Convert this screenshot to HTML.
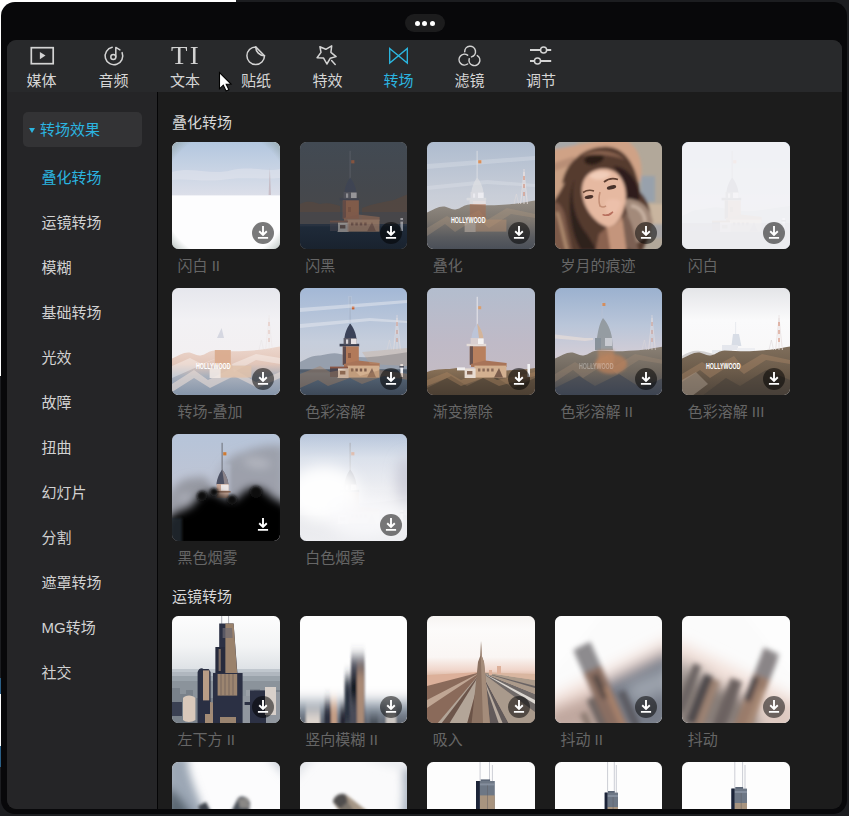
<!DOCTYPE html>
<html lang="zh-CN">
<head>
<meta charset="utf-8">
<title>转场</title>
<style>
html,body{margin:0;padding:0;}
body{width:849px;height:816px;overflow:hidden;background:#1c1d20;position:relative;
 font-family:"Liberation Sans","Noto Sans CJK SC",sans-serif;-webkit-font-smoothing:antialiased;}
.abs{position:absolute;}
#layer{left:0;top:0;width:841.5px;height:809px;overflow:hidden;}
#bgw{left:0;top:0;width:236px;height:16px;background:#fff;}
#bgl{left:0;top:0;width:16px;height:376px;background:#fff;}
#bgl2{left:0;top:678px;width:2px;height:89px;background:#2b5f86;}
#bgl3{left:0;top:694px;width:2px;height:52px;background:#fff;}
#win{left:1.2px;top:2px;width:845.8px;height:812px;background:#08080a;border-radius:14px;}
#pill{left:405px;top:14px;width:40px;height:18px;border-radius:9px;background:#1c1c1d;}
#pill i{position:absolute;top:6.5px;width:5.4px;height:5.4px;border-radius:50%;background:#fff;}
#panel{left:7px;top:39.5px;width:834.5px;height:769.5px;border-radius:9px;background:#1c1c1c;overflow:hidden;}
#tabs{left:0;top:0;width:100%;height:52.5px;background:#28292b;}
#side{left:0;top:52.5px;width:150px;height:720px;background:#252527;}
#sdiv{left:150px;top:52.5px;width:1.2px;height:720px;background:#050506;}
.tab{position:absolute;top:0;width:72px;height:52px;color:#d6d6d6;font-size:15px;text-align:center;}
.tab svg{position:absolute;left:50%;top:4px;margin-left:-14px;width:28px;height:24px;}
.tab span{position:absolute;left:0;right:0;top:29px;line-height:22px;}
.tab.on{color:#2bb5e0;}
.tl{position:absolute;top:70px;width:72px;height:22px;line-height:22px;text-align:center;font-size:15px;color:#d6d6d6;white-space:nowrap;}
.tl.on{color:#2bb5e0;}
#ti{left:171px;top:42.2px;width:40px;height:28px;line-height:28px;text-align:left;font-family:"Liberation Serif",serif;font-size:24.5px;letter-spacing:2px;color:#d2d2d2;white-space:nowrap;transform:scaleX(1.1);transform-origin:0 0;}
#cat{left:22.5px;top:112px;width:119.2px;height:35px;border-radius:5px;background:#333335;color:#2bb5e0;font-size:15px;line-height:34px;}
#cat b{position:absolute;left:6.6px;top:15.6px;width:0;height:0;border-left:3px solid transparent;border-right:3px solid transparent;border-top:5px solid #2bb5e0;}
#cat span{position:absolute;left:17.5px;top:0.5px;}
.si{position:absolute;left:41.5px;height:24px;line-height:24px;font-size:15px;color:#d2d2d2;white-space:nowrap;}
.si.on{color:#2bb5e0;}
.h{position:absolute;left:172px;height:22px;line-height:22px;font-size:15px;color:#d8d8d8;white-space:nowrap;}
.t{position:absolute;width:107.8px;height:107.3px;border-radius:6.5px;overflow:hidden;background:#888;}
.t svg.pic{position:absolute;left:0;top:0;width:108px;height:108px;}
.dl{position:absolute;left:80.4px;top:80.3px;width:22px;height:22px;border-radius:50%;background:rgba(0,0,0,.52);}
.dl svg{position:absolute;left:0;top:0;width:22px;height:22px;}
.l{position:absolute;height:20px;line-height:20px;font-size:15px;color:#666;white-space:nowrap;}
</style>
</head>
<body>
<svg width="0" height="0" style="position:absolute">
<defs>
<filter id="lt" x="-5%" y="-5%" width="110%" height="110%"><feColorMatrix type="matrix" values=".42 0 0 0 .52  0 .42 0 0 .52  0 0 .42 0 .54  0 0 0 1 0"/></filter>
<filter id="lt2" x="-5%" y="-5%" width="110%" height="110%"><feColorMatrix type="matrix" values=".28 0 0 0 .72  0 .28 0 0 .72  0 0 .28 0 .74  0 0 0 1 0"/></filter>
<filter id="b1" x="-20%" y="-20%" width="140%" height="140%"><feGaussianBlur stdDeviation="0.6"/></filter>
<filter id="b2" x="-20%" y="-20%" width="140%" height="140%"><feGaussianBlur stdDeviation="1.6"/></filter>
<filter id="b3" x="-30%" y="-30%" width="160%" height="160%"><feGaussianBlur stdDeviation="2.5"/></filter>
<filter id="b4" x="-30%" y="-30%" width="160%" height="160%"><feGaussianBlur stdDeviation="4"/></filter>
<filter id="b7" x="-40%" y="-40%" width="180%" height="180%"><feGaussianBlur stdDeviation="7"/></filter>
<filter id="bv" x="-20%" y="-40%" width="140%" height="180%"><feGaussianBlur stdDeviation="1.2 7"/></filter>
<linearGradient id="skyT" x1="0" y1="0" x2="0" y2="1"><stop offset="0" stop-color="#9db3d3"/><stop offset=".55" stop-color="#bcc4d6"/><stop offset="1" stop-color="#d3cdd0"/></linearGradient>
<linearGradient id="seaT" x1="0" y1="0" x2="0" y2="1"><stop offset="0" stop-color="#5b6b7c"/><stop offset="1" stop-color="#3c4756"/></linearGradient>
<linearGradient id="skyH" x1="0" y1="0" x2="0" y2="1"><stop offset="0" stop-color="#a4b5ca"/><stop offset=".6" stop-color="#c3c7d1"/><stop offset="1" stop-color="#d2ccce"/></linearGradient>
<linearGradient id="hillG" x1="0" y1="0" x2="0" y2="1"><stop offset="0" stop-color="#8f7d68"/><stop offset=".45" stop-color="#7a6852"/><stop offset="1" stop-color="#4d473f"/></linearGradient>
<linearGradient id="skyC" x1="0" y1="0" x2="0" y2="1"><stop offset="0" stop-color="#fdfdfd"/><stop offset=".28" stop-color="#f3f4f5"/><stop offset=".5" stop-color="#dde1e5"/><stop offset="1" stop-color="#c4ccd4"/></linearGradient>
<!-- Maiden's tower -->
<g id="tower">
 <rect x="49.6" y="8.8" width="1" height="29" fill="#6d6f78"/>
 <rect x="51.2" y="18.2" width="3.2" height="3.2" fill="#c8602e"/>
 <path d="M50.2 35.5 C53 39 56 45 56.4 50.5 H44.4 C44.8 45 47.4 39 50.2 35.5Z" fill="#3a4258"/>
 <rect x="39.6" y="55.8" width="19.6" height="2.6" fill="#3b4052"/>
 <rect x="43.6" y="50" width="13" height="6.5" fill="#5b5a66"/>
 <rect x="51" y="50.6" width="5.6" height="5.4" fill="#e6e2e4"/>
 <rect x="46" y="51.4" width="2.2" height="4.4" fill="#d8d4d8"/>
 <rect x="42.8" y="58.4" width="16" height="18.4" fill="#b27a5a"/>
 <rect x="42.8" y="58.4" width="3.2" height="18.4" fill="#5a4a4e"/>
 <rect x="48" y="65" width="3" height="5" fill="#8a5a44"/>
 <path d="M44 76 L58 72.5 L79.6 75 V79 H44Z" fill="#a87458"/>
 <rect x="47.4" y="77.6" width="32" height="12" fill="#d3b090"/>
 <rect x="37.6" y="80.4" width="11" height="9.6" fill="#e2d4c8"/>
 <rect x="30" y="79.4" width="8" height="9.6" fill="#4a4650"/>
 <rect x="30" y="78.6" width="18" height="1.8" fill="#8a5644"/>
 <path d="M51 80.6h2.4v3h-2.4zM55.4 80.6h2.4v3h-2.4zM59.8 80.6h2.4v3h-2.4zM64.2 80.6h2.4v3h-2.4zM40 83h5.4v3.4h-5.4z" fill="#7a5a4a"/>
 <path d="M67 89.6 L72 80 L76 89.6Z" fill="#8a6a58"/>
 <rect x="100.4" y="76" width="2.6" height="13" fill="#eeeef2"/>
 <rect x="99.4" y="78" width="4.6" height="1.6" fill="#50525e"/>
</g>
<!-- Hollywood ridge -->
<path id="ridge" d="M0 70.6 C6 68 11 64.6 16 64.6 C21 64.6 24 68 28.5 67.4 C34 66.6 37 62.4 42.6 62.4 C51 62.4 59 63.6 67.6 63.2 C76 62.8 82 62.4 88 61.8 C95 61 102 59.6 108 58.6 V108 H0Z"/>
<g id="rtower">
 <path d="M97 27 V62 M97 30 L93.6 62 M97 30 L100.4 62" fill="none" stroke="#e8e0e0" stroke-width=".8"/>
 <path d="M97 34v4M97 42v4M97 50v4" stroke="#d2846a" stroke-width="1"/>
 <path d="M87 62 L89.4 52 L91.6 62" fill="none" stroke="#ddd8da" stroke-width=".6"/>
</g>
<!-- Skyscraper (Willis) -->
<g id="sky1">
 <path d="M49.7 0V8M56.6 0V8" stroke="#8a8e98" stroke-width=".7"/>
 <path d="M47.2 7.6 H61.6 L65.4 57 H70.6 V108 H41 V57 H43.6 V31 H47.2Z" fill="#2b3044"/>
 <path d="M53.4 7.6 H61.6 L65.2 57 H53.4Z" fill="#9a826c"/>
 <path d="M50.6 12 H60 L60.6 22 H50.6Z" fill="#6e6a72" opacity=".7"/>
 <rect x="43.6" y="31" width="9.4" height="26" fill="#262a3c"/>
 <rect x="46.6" y="33" width="2.2" height="22" fill="#7a6a62"/>
 <rect x="45.6" y="58" width="19.6" height="21.6" fill="#9c8570"/>
 <path d="M49 58v21.6M53 58v21.6M57 58v21.6M61 58v21.6" stroke="#6a5c58" stroke-width=".7"/>
 <rect x="48" y="101" width="16" height="7" fill="#9a8470"/>
</g>
<g id="sky2">
 <path d="M25.6 56 C27 52 30 51.6 31.4 53 H36.6 L38.6 56 V108 H25.6Z" fill="#2a2f43"/>
 <rect x="31" y="54.4" width="6.2" height="30" fill="#b89c86"/>
 <path d="M38 86 C44 86 47 92 44 100 L38 108Z" fill="#a08a78"/>
 <rect x="33" y="98" width="8" height="10" fill="#a48c76"/>
 <path d="M11 82 C13 78.6 21 78.6 23.4 82 V104 C20 106.6 13.6 106.6 11 104Z" fill="#d9c8ba"/>
 <rect x="0" y="86" width="10" height="14" fill="#3a4052"/>
 <rect x="78" y="74.4" width="16" height="33.6" fill="#2c3144"/>
 <rect x="93" y="71" width="11" height="28" fill="#d8d0ca"/>
 <rect x="72.6" y="86" width="6" height="3" fill="#2c3144"/>
</g>
</defs>
</svg>
<div class="abs" id="bgw"></div><div class="abs" id="bgl"></div><div class="abs" id="bgl2"></div><div class="abs" id="bgl3"></div>
<div class="abs" id="win"></div>
<div class="abs" id="pill"><i style="left:9.5px"></i><i style="left:17px"></i><i style="left:24.5px"></i></div>
<div class="abs" id="panel">
 <div class="abs" id="tabs"></div>
 <div class="abs" id="side"></div>
 <div class="abs" id="sdiv"></div>
</div>
<div class="abs" id="layer">
<svg class="abs" id="ticons" width="849" height="100" viewBox="0 0 849 100" style="left:0;top:0" fill="none" stroke="#d4d4d4" stroke-width="1.5" stroke-linejoin="round" stroke-linecap="round">
<!-- media -->
<rect x="31.3" y="47.7" width="21.9" height="16" stroke-width="1.7" stroke-linejoin="miter"/>
<path d="M39.9 52 L45.5 55.6 L39.9 59.2 Z" fill="#d4d4d4" stroke="none"/>
<!-- audio -->
<path d="M112.2 47.3 A8.8 8.8 0 1 0 122.1 52.6"/>
<circle cx="113.3" cy="57.1" r="2.5"/>
<path d="M115.8 57.1 V47.4 L119.9 49.9"/>
<!-- sticker -->
<path d="M255.7 46.9 A8.8 8.8 0 1 0 264.5 55.7 Z"/>
<path d="M255.7 46.9 A8.8 8.8 0 0 0 264.5 55.7"/>
<!-- effects -->
<path d="M319.9 46.7 L325.8 49.3 L331.7 45.8 L330.9 52.4 L336.1 56.6 L330.2 58.3 L326.9 64 L323.6 58.1 L317.1 57.7 L321 52.4 Z"/>
<path d="M331.6 60.6 L335.2 64.4"/>
<!-- transition -->
<path d="M389.7 48.5 L407.3 63 V48.5 L389.7 63 Z" stroke="#2bb8e2" stroke-width="1.35" stroke-linejoin="miter"/>
<!-- filter -->
<path d="M464.7 51.7 A5.4 5.4 0 1 1 471.5 56.9"/>
<path d="M467.6 55.2 A5.4 5.4 0 1 0 467.6 64"/>
<path d="M469.2 58.8 A5.4 5.4 0 1 0 477.3 55.6"/>
<!-- adjust -->
<g stroke-width="1.8" stroke-linecap="butt"><path d="M530 50 H540.5 M546.7 50 H551.2 M530 61 H534.4 M540.6 61 H551.2"/></g>
<circle cx="543.6" cy="50" r="3.05"/>
<circle cx="537.5" cy="61" r="3.05"/>
</svg>
<div class="abs" id="ti">TI</div>
<div class="tl" style="left:5.5px">媒体</div>
<div class="tl" style="left:77.5px">音频</div>
<div class="tl" style="left:149px">文本</div>
<div class="tl" style="left:220px">贴纸</div>
<div class="tl" style="left:291.5px">特效</div>
<div class="tl on" style="left:362.5px">转场</div>
<div class="tl" style="left:433.5px">滤镜</div>
<div class="tl" style="left:505px">调节</div>
<div class="abs" id="cat"><b></b><span>转场效果</span></div>
<div class="si on" style="top:165.5px">叠化转场</div>
<div class="si" style="top:210.5px">运镜转场</div>
<div class="si" style="top:255.5px">模糊</div>
<div class="si" style="top:300.5px">基础转场</div>
<div class="si" style="top:345.5px">光效</div>
<div class="si" style="top:390.5px">故障</div>
<div class="si" style="top:435.5px">扭曲</div>
<div class="si" style="top:480.5px">幻灯片</div>
<div class="si" style="top:525.5px">分割</div>
<div class="si" style="top:570.5px">遮罩转场</div>
<div class="si" style="top:615.5px">MG转场</div>
<div class="si" style="top:660.5px">社交</div>
<div class="h" style="top:111.5px">叠化转场</div>
<div class="h" style="top:585.5px">运镜转场</div>
<div class="t" id="t00" style="left:172px;width:108px;top:142px"><svg class="pic" viewBox="0 0 108 108" preserveAspectRatio="none"><defs><linearGradient id="g00" x1="0" y1="0" x2="0" y2="1"><stop offset="0" stop-color="#b3c7df"/><stop offset="1" stop-color="#dcdfe9"/></linearGradient>
<radialGradient id="v00" cx=".5" cy=".5" r=".75"><stop offset=".78" stop-color="#7f9088" stop-opacity="0"/><stop offset="1" stop-color="#7f9088" stop-opacity=".75"/></radialGradient></defs>
<rect width="108" height="108" fill="#fdfdfe"/>
<rect width="108" height="53.4" fill="url(#g00)"/>
<path d="M0 30 C20 24 40 34 60 28 C80 24 95 30 108 27 V36 C90 38 70 34 50 38 C30 40 12 36 0 38Z" fill="#e4e6ee" opacity=".5"/>
<path d="M97.8 25.6 L96.6 53 H99 Z" fill="#c3b4bd" opacity=".8"/>
<rect width="108" height="108" fill="url(#v00)"/></svg><div class="dl"><svg viewBox="0 0 22 22"><path d="M11 4V12.6M7.2 9.2L11 12.9L14.8 9.2M5.9 15.9H16.1" fill="none" stroke="#fff" stroke-width="1.9"/></svg></div></div>
<div class="l" style="left:177.5px;top:255.5px">闪白 II</div>
<div class="t" id="t01" style="left:299.8px;width:107.4px;top:142px"><svg class="pic" viewBox="0 0 108 108" preserveAspectRatio="none"><defs><linearGradient id="g01" x1="0" y1="0" x2="0" y2="1"><stop offset="0" stop-color="#424a53"/><stop offset=".45" stop-color="#45484d"/><stop offset=".8" stop-color="#494849"/><stop offset="1" stop-color="#494849"/></linearGradient>
<linearGradient id="s01" x1="0" y1="0" x2="0" y2="1"><stop offset="0" stop-color="#1f2b3a"/><stop offset="1" stop-color="#19222e"/></linearGradient></defs>
<rect width="108" height="108" fill="url(#g01)"/>
<path d="M0 62 C8 58 14 60 20 62 C28 60 34 62 40 64 V84 H0Z M62 66 C72 62 84 60 94 58 L108 52 V84 H62Z" fill="#55473f" opacity=".75"/>
<path d="M0 70 h108 v14 H0Z" fill="#3b4652" opacity=".5"/>
<rect y="82" width="108" height="26" fill="url(#s01)"/>
<rect y="82" width="108" height="2.4" fill="#2b3542" opacity=".8"/>
<g opacity=".5"><use href="#tower"/></g>
<rect x="42.8" y="58.4" width="16" height="18.4" fill="#8a4f38" opacity=".35"/>
<rect x="47.4" y="77.6" width="32" height="12" fill="#8a5a44" opacity=".3"/></svg><div class="dl"><svg viewBox="0 0 22 22"><path d="M11 4V12.6M7.2 9.2L11 12.9L14.8 9.2M5.9 15.9H16.1" fill="none" stroke="#fff" stroke-width="1.9"/></svg></div></div>
<div class="l" style="left:305.3px;top:255.5px">闪黑</div>
<div class="t" id="t02" style="left:427.2px;width:107.9px;top:142px"><svg class="pic" viewBox="0 0 108 108" preserveAspectRatio="none"><defs><linearGradient id="g02" x1="0" y1="0" x2="0" y2="1"><stop offset="0" stop-color="#aebccf"/><stop offset=".5" stop-color="#c9ced8"/><stop offset="1" stop-color="#d9d5d6"/></linearGradient>
<linearGradient id="h02" x1="0" y1="0" x2="0" y2="1"><stop offset="0" stop-color="#8f877d"/><stop offset=".4" stop-color="#777068"/><stop offset=".75" stop-color="#505256"/><stop offset="1" stop-color="#3e444e"/></linearGradient></defs>
<rect width="108" height="108" fill="url(#g02)"/>
<path d="M0 22 L108 14 V18 L0 27Z M0 44 L60 38 L108 42 V45 L60 42 L0 48Z" fill="#e6e8ee" opacity=".3"/>
<g opacity=".75" filter="url(#lt2)"><use href="#tower"/></g><rect x="51.2" y="18.2" width="3.2" height="3.2" fill="#d9905a"/>
<use href="#ridge" fill="url(#h02)" opacity=".93"/>
<path d="M0 86 L20 74 L30 80 L52 68 L60 78 L80 66 L108 72 V76 L84 72 L62 86 L50 76 L28 90 L18 82 L0 94Z" fill="#b59a80" opacity=".3"/>
<g opacity=".5"><rect x="42.8" y="62" width="16" height="14.8" fill="#a8694a"/><rect x="47.4" y="77.6" width="32" height="12" fill="#b58e70"/><rect x="37.6" y="80.4" width="11" height="9.6" fill="#cbbcb0"/></g>
<use href="#rtower"/>
<text x="24" y="80.8" font-family="'Liberation Sans',sans-serif" font-weight="bold" font-size="9" textLength="34.5" lengthAdjust="spacingAndGlyphs" fill="#fff">HOLLYWOOD</text></svg><div class="dl"><svg viewBox="0 0 22 22"><path d="M11 4V12.6M7.2 9.2L11 12.9L14.8 9.2M5.9 15.9H16.1" fill="none" stroke="#fff" stroke-width="1.9"/></svg></div></div>
<div class="l" style="left:432.7px;top:255.5px">叠化</div>
<div class="t" id="t03" style="left:554.9px;width:107.4px;top:142px"><svg class="pic" viewBox="0 0 108 108" preserveAspectRatio="none"><rect width="108" height="108" fill="#b2a89a"/>
<g filter="url(#b2)">
<rect x="-4" y="-4" width="26" height="12" fill="#a7a8a8"/>
<path d="M86 34 h14 v26 h-14Z" fill="#98a1ac"/>
<path d="M92 62 h20 v20 h-20Z" fill="#c9b59f"/>
<path d="M96 82 h16 v14 h-16Z" fill="#a9a7a8"/>
<path d="M-4 8 C20 4 40 -2 70 -4 L80 6 C87 16 88 30 85 40 L70 30 C60 14 40 12 24 22 L-4 36Z" fill="#cfa286"/>
<path d="M-4 22 L20 14 L12 40 L-4 46Z" fill="#b88e76"/>
<path d="M-4 30 L14 24 L10 56 L-4 60Z" fill="#c9a084"/>
<path d="M7 42 C11 18 32 3 54 5 C72 7 82 26 85 50 C96 60 100 82 92 98 L86 112 H-4 V62 C2 56 6 48 10 40Z" fill="#553a2f"/>
<path d="M-4 60 C6 58 10 70 12 84 L18 112 H-4Z" fill="#7c5a49"/>
<path d="M2 70 C6 80 8 94 12 108" stroke="#b08c70" stroke-width="3" fill="none"/>
<ellipse cx="39" cy="17" rx="10" ry="5.5" fill="#2a1c19" transform="rotate(-12 39 17)"/>
<path d="M26 14 C40 6 60 8 70 18 C58 12 40 12 26 14Z" fill="#8a6450"/>
<path d="M58 24 C72 24 84 38 85 56 C78 64 70 62 66 54 C70 44 66 32 58 24Z" fill="#2f1f1b"/>
<path d="M20 36 C14 56 20 78 32 92 L42 108 H26 C16 92 10 60 20 36Z" fill="#2f201c"/>
<path d="M68 58 C80 54 96 64 98 80 C94 94 84 102 74 104 C76 90 74 72 68 58Z" fill="#a38a7a"/>
<path d="M76 64 C84 64 90 72 90 80" stroke="#ccb6a6" stroke-width="3" fill="none"/>
<path d="M70 70 C66 80 70 92 64 104 L84 110 C80 96 78 80 70 70Z" fill="#7b6052"/>
<path d="M27 46 C28 30 44 24 56 28 C68 32 73 48 70 62 C67 76 60 86 53 85 C42 83 26 66 27 46Z" fill="#e6b9a1"/>
<path d="M34 34 C40 28 50 28 56 32 C52 38 40 40 34 34Z" fill="#f1cdb9"/>
<path d="M50 60 C54 56 62 56 66 60 C64 70 58 76 52 72Z" fill="#ecc0aa"/>
<path d="M52 85 C58 86 64 80 67 74 L72 112 H44 L46 92Z" fill="#c4957b"/>
<path d="M44 92 L52 86 L56 112 H40Z" fill="#8a6250"/>
</g>
<g filter="url(#b1)">
<path d="M28 50.5 q5-3.5 11-1.5" stroke="#6a4838" stroke-width="1.6" fill="none"/>
<path d="M49 40 q6-5 14-2.5" stroke="#5e3f31" stroke-width="1.7" fill="none"/>
<ellipse cx="34" cy="55" rx="4.4" ry="1.9" fill="#4a3129" transform="rotate(-10 34 55)"/>
<ellipse cx="56.5" cy="45.4" rx="4.8" ry="2" fill="#47302a" transform="rotate(-14 56.5 45.4)"/>
<path d="M45 50 q-2 8 0 14 q3 2 6 0" stroke="#c48f76" stroke-width="1.6" fill="none"/>
<path d="M47.6 72.6 q5 1.6 10.4-2.8 q-4 5.4-10.4 2.8Z" fill="#b8705e" stroke="#b8705e" stroke-width="1.2"/>
</g></svg><div class="dl"><svg viewBox="0 0 22 22"><path d="M11 4V12.6M7.2 9.2L11 12.9L14.8 9.2M5.9 15.9H16.1" fill="none" stroke="#fff" stroke-width="1.9"/></svg></div></div>
<div class="l" style="left:560.4px;top:255.5px">岁月的痕迹</div>
<div class="t" id="t04" style="left:682.2px;width:108px;top:142px"><svg class="pic" viewBox="0 0 108 108" preserveAspectRatio="none"><rect width="108" height="108" fill="url(#skyT)"/>
<path d="M0 74 C8 70 14 67 20 67.6 C28 66 34 64 40 66 C50 68 60 70 70 69 C82 68 94 66 108 64 V84 H0Z" fill="#8d96a6" opacity=".85"/>
<rect y="81.4" width="108" height="27" fill="url(#seaT)"/>
<rect y="81.4" width="108" height="3" fill="#4c5562" opacity=".6"/>
<use href="#tower"/><rect width="108" height="108" fill="#f5f5f7" opacity=".935"/><rect y="81.4" width="108" height="27" fill="#ececf0" opacity=".6"/></svg><div class="dl"><svg viewBox="0 0 22 22"><path d="M11 4V12.6M7.2 9.2L11 12.9L14.8 9.2M5.9 15.9H16.1" fill="none" stroke="#fff" stroke-width="1.9"/></svg></div></div>
<div class="l" style="left:687.7px;top:255.5px">闪白</div>
<div class="t" id="t10" style="left:172px;width:108px;top:288px"><svg class="pic" viewBox="0 0 108 108" preserveAspectRatio="none"><defs><linearGradient id="g10" x1="0" y1="0" x2="0" y2="1"><stop offset="0" stop-color="#e6e7ed"/><stop offset=".3" stop-color="#f2f1f4"/><stop offset="1" stop-color="#f3eeee"/></linearGradient>
<linearGradient id="h10" x1="0" y1="0" x2="0" y2="1"><stop offset="0" stop-color="#ecd6cc"/><stop offset=".35" stop-color="#e2c6b9"/><stop offset=".6" stop-color="#a9b0bc"/><stop offset="1" stop-color="#8393a8"/></linearGradient></defs>
<rect width="108" height="108" fill="url(#g10)"/>
<use href="#ridge" fill="url(#h10)"/>
<path d="M0 96 L22 82 L36 92 L60 80 L84 94 L108 84 V90 L86 100 L62 88 L38 100 L22 90 L0 104Z" fill="#e9dcd6" opacity=".6"/>
<path d="M0 78 L18 70 L30 76 L50 68 L0 90Z M60 76 L84 66 L108 70 V76 L84 72 L62 84Z" fill="#fff" opacity=".35"/>
<rect x="42.8" y="62" width="16" height="15" fill="#d9aa8c" opacity=".9"/>
<rect x="47.4" y="77.6" width="32" height="12" fill="#e0c2aa" opacity=".85"/>
<rect x="37.6" y="80.4" width="11" height="9.6" fill="#f3ebe6" opacity=".85"/>
<path d="M45 50 L49.6 40 L52 50Z" fill="#c9ccd8" opacity=".7"/>
<use href="#rtower" opacity=".45"/>
<text x="24" y="80.8" font-family="'Liberation Sans',sans-serif" font-weight="bold" font-size="9" textLength="34.5" lengthAdjust="spacingAndGlyphs" fill="#fff">HOLLYWOOD</text></svg><div class="dl"><svg viewBox="0 0 22 22"><path d="M11 4V12.6M7.2 9.2L11 12.9L14.8 9.2M5.9 15.9H16.1" fill="none" stroke="#fff" stroke-width="1.9"/></svg></div></div>
<div class="l" style="left:177.5px;top:401.5px">转场-叠加</div>
<div class="t" id="t11" style="left:299.8px;width:107.4px;top:288px"><svg class="pic" viewBox="0 0 108 108" preserveAspectRatio="none"><rect width="108" height="108" fill="url(#g11)"/>
<path d="M0 74 C8 70 14 67 20 67.6 C28 66 34 64 40 66 C50 68 60 70 70 69 C82 68 94 66 108 64 V84 H0Z" fill="#8d96a6" opacity=".85"/>
<rect y="81.4" width="108" height="27" fill="url(#seaT)"/>
<rect y="81.4" width="108" height="3" fill="#4c5562" opacity=".6"/>
<use href="#tower"/><defs><linearGradient id="g11" x1="0" y1="0" x2="0" y2="1"><stop offset="0" stop-color="#a3b8d6"/><stop offset=".5" stop-color="#c6cedc"/><stop offset="1" stop-color="#d0ccd0"/></linearGradient></defs>
<rect x="48" y="8" width="4" height="28" fill="#b4c3d9" opacity=".8"/><path d="M0 20 L108 12 V15 L0 24Z M0 36 L70 30 L108 33 V35 L70 33 L0 40Z" fill="#e8eaf0" opacity=".5"/>
<use href="#rtower" opacity=".75"/>
<path d="M0 86 L20 78 L30 84 L52 80 L60 88 L80 82 L108 86 V92 L84 88 L62 96 L50 90 L28 98 L18 92 L0 100Z" fill="#a8805e" opacity=".4"/>
<path d="M62 64 L108 60 V78 L70 76Z" fill="#c9a27e" opacity=".28"/></svg><div class="dl"><svg viewBox="0 0 22 22"><path d="M11 4V12.6M7.2 9.2L11 12.9L14.8 9.2M5.9 15.9H16.1" fill="none" stroke="#fff" stroke-width="1.9"/></svg></div></div>
<div class="l" style="left:305.3px;top:401.5px">色彩溶解</div>
<div class="t" id="t12" style="left:427.2px;width:107.9px;top:288px"><svg class="pic" viewBox="0 0 108 108" preserveAspectRatio="none"><defs><linearGradient id="g12" x1="0" y1="0" x2="0" y2="1"><stop offset="0" stop-color="#b3bdce"/><stop offset=".5" stop-color="#bfbac7"/><stop offset="1" stop-color="#c6bcc2"/></linearGradient>
<linearGradient id="h12" x1="0" y1="0" x2="0" y2="1"><stop offset="0" stop-color="#8a7258"/><stop offset="1" stop-color="#59483a"/></linearGradient></defs>
<rect width="108" height="108" fill="url(#g12)"/>
<rect x="49.7" y="8.8" width="1" height="29" fill="#e8e6ea"/>
<rect x="51.2" y="18.2" width="3" height="3" fill="#d9a070"/>
<path d="M50.2 35.5 C53 39 56 45 56.4 50.5 H44.4 C44.8 45 47.4 39 50.2 35.5Z" fill="#bcc4d8"/>
<path d="M50.2 35.5 C53 39 56 45 56.4 50.5 H52 Z" fill="#d3b49a"/>
<rect x="39.6" y="55.8" width="19.6" height="2.4" fill="#e4dcd8"/>
<rect x="43.6" y="50" width="13" height="6.5" fill="#d9cfd0"/>
<rect x="51" y="50.6" width="5.6" height="5.4" fill="#f4f2f2"/>
<rect x="42.8" y="58.4" width="16" height="18.4" fill="#b8805e"/>
<rect x="42.8" y="58.4" width="3.2" height="18.4" fill="#6a5450"/>
<path d="M44 76 L58 72.5 L79.6 75 V79 H44Z" fill="#a87458"/>
<path d="M0 84 C10 80 20 82 30 80 C40 82 60 84 70 83 C84 82 96 82 108 80 V108 H0Z" fill="url(#h12)"/>
<path d="M0 100 L24 88 L40 98 L64 86 L86 100 L108 90 V108 H0Z" fill="#3e352c" opacity=".5"/>
<path d="M0 92 L20 84 L34 92 L56 84 L70 92 L108 84 V88 L72 98 L56 90 L34 98 L20 90 L0 98Z" fill="#b08862" opacity=".4"/>
<rect x="47.4" y="77.6" width="32" height="12" fill="#d3b090"/>
<rect x="37.6" y="80.4" width="11" height="9.6" fill="#e8dcd2"/>
<rect x="30" y="79.4" width="8" height="3" fill="#f0eeee"/>
<path d="M51 80.6h2.4v3h-2.4zM55.4 80.6h2.4v3h-2.4zM59.8 80.6h2.4v3h-2.4zM64.2 80.6h2.4v3h-2.4zM40 83h5.4v3.4h-5.4z" fill="#8a6a58"/>
<path d="M67 89.6 L72 80 L76 89.6Z" fill="#7a5c4c"/>
<rect x="100.4" y="76" width="2.6" height="13" fill="#f2f2f4"/></svg><div class="dl"><svg viewBox="0 0 22 22"><path d="M11 4V12.6M7.2 9.2L11 12.9L14.8 9.2M5.9 15.9H16.1" fill="none" stroke="#fff" stroke-width="1.9"/></svg></div></div>
<div class="l" style="left:432.7px;top:401.5px">渐变擦除</div>
<div class="t" id="t13" style="left:554.9px;width:107.4px;top:288px"><svg class="pic" viewBox="0 0 108 108" preserveAspectRatio="none"><defs><linearGradient id="g13" x1="0" y1="0" x2="0" y2="1"><stop offset="0" stop-color="#9bb1cf"/><stop offset=".35" stop-color="#bac6d9"/><stop offset=".62" stop-color="#d3cdd6"/><stop offset="1" stop-color="#d3cdd6"/></linearGradient>
<linearGradient id="h13" x1="0" y1="0" x2="0" y2="1"><stop offset="0" stop-color="#8a8074"/><stop offset=".5" stop-color="#6f675e"/><stop offset="1" stop-color="#434852"/></linearGradient></defs>
<rect width="108" height="108" fill="url(#g13)"/>
<path d="M0 46.5 L30 50 L38 50 V52 L30 53 L0 50.5Z" fill="#f0e2d8" opacity=".55"/>
<g filter="url(#b1)" opacity=".85"><path d="M48 30 C52 34 56 42 57 50 L58 62 H40 L42 50 C43 42 45 34 48 30Z" fill="#8e9599"/>
<rect x="40" y="50" width="6" height="12" fill="#7d8890"/><rect x="50" y="50" width="7" height="8" fill="#c9ccd2"/></g>
<rect x="46.6" y="14" width="1" height="16" fill="#b9c2d4" opacity=".7"/><rect x="47.4" y="15" width="3" height="3" fill="#d98a50" opacity=".9"/>
<use href="#ridge" fill="url(#h13)"/>
<path d="M0 86 L20 74 L30 80 L52 68 L60 78 L80 66 L108 72 V76 L84 72 L62 86 L50 76 L28 90 L18 82 L0 94Z" fill="#a89078" opacity=".3"/>
<path d="M0 100 L24 88 L40 98 L64 86 L86 100 L108 90 V108 H0Z" fill="#364052" opacity=".5"/>
<g filter="url(#b2)"><ellipse cx="56" cy="76" rx="16" ry="10" fill="#bd8058" opacity=".7"/><rect x="43" y="62" width="16" height="14" fill="#b98460" opacity=".7"/></g>
<use href="#rtower" opacity=".7"/>
<text x="24" y="80.8" font-family="'Liberation Sans',sans-serif" font-weight="bold" font-size="9" textLength="34.5" lengthAdjust="spacingAndGlyphs" fill="#fff" opacity=".3">HOLLYWOOD</text></svg><div class="dl"><svg viewBox="0 0 22 22"><path d="M11 4V12.6M7.2 9.2L11 12.9L14.8 9.2M5.9 15.9H16.1" fill="none" stroke="#fff" stroke-width="1.9"/></svg></div></div>
<div class="l" style="left:560.4px;top:401.5px">色彩溶解 II</div>
<div class="t" id="t14" style="left:682.2px;width:108px;top:288px"><svg class="pic" viewBox="0 0 108 108" preserveAspectRatio="none"><defs><linearGradient id="g14" x1="0" y1="0" x2="0" y2="1"><stop offset="0" stop-color="#e4e5e8"/><stop offset=".3" stop-color="#fafafb"/><stop offset="1" stop-color="#f6f4f4"/></linearGradient>
<linearGradient id="h14" x1="0" y1="0" x2="0" y2="1"><stop offset="0" stop-color="#7f6e5b"/><stop offset=".5" stop-color="#6b5b4a"/><stop offset="1" stop-color="#4e443b"/></linearGradient></defs>
<rect width="108" height="108" fill="url(#g14)"/>
<path d="M0 68 C6 64 12 62 18 63 C24 63 28 66 34 66 L0 78Z" fill="#b9b6b8" opacity=".6"/>
<g opacity=".9"><path d="M53.6 34 V46" stroke="#dfe3ea" stroke-width=".8"/><path d="M51 46 h6 l2.4 12 h-10Z" fill="#d5dbe4"/><rect x="40" y="57" width="16" height="5" fill="#e3e6ec"/><rect x="55" y="60" width="18" height="4" fill="#eceef2"/><rect x="30" y="62" width="20" height="3.4" fill="#e6e8ec"/></g>
<use href="#ridge" fill="url(#h14)"/>
<path d="M0 86 L20 74 L30 80 L52 68 L60 78 L80 66 L108 72 V76 L84 72 L62 86 L50 76 L28 90 L18 82 L0 94Z" fill="#b08a68" opacity=".4"/>
<path d="M20 108 L44 90 L58 98 L84 82 L108 92 V108Z" fill="#3e3a36" opacity=".45"/>
<path d="M0 92 L14 84 L26 96 L10 108 H0Z" fill="#a89a8c" opacity=".5"/>
<use href="#rtower"/>
<text x="24" y="80.8" font-family="'Liberation Sans',sans-serif" font-weight="bold" font-size="9" textLength="34.5" lengthAdjust="spacingAndGlyphs" fill="#fff">HOLLYWOOD</text></svg><div class="dl"><svg viewBox="0 0 22 22"><path d="M11 4V12.6M7.2 9.2L11 12.9L14.8 9.2M5.9 15.9H16.1" fill="none" stroke="#fff" stroke-width="1.9"/></svg></div></div>
<div class="l" style="left:687.7px;top:401.5px">色彩溶解 III</div>
<div class="t" id="t20" style="left:172px;width:108px;top:434px"><svg class="pic" viewBox="0 0 108 108" preserveAspectRatio="none"><defs><linearGradient id="g20" x1="0" y1="0" x2="0" y2="1"><stop offset="0" stop-color="#b6c4d9"/><stop offset="1" stop-color="#c9c5ce"/></linearGradient></defs>
<rect width="108" height="108" fill="url(#g20)"/>
<g filter="url(#b4)">
<path d="M46 40 C54 26 60 20 72 18 C86 12 100 10 112 12 V90 H46Z" fill="#979aa3" opacity=".85"/>
<path d="M70 26 C80 22 92 24 100 30 C92 36 80 36 70 26Z" fill="#bfc1ca" opacity=".7"/>
<path d="M-4 62 C4 48 14 42 24 44 C30 40 36 44 40 52 L44 90 H-4Z" fill="#8e9099" opacity=".85"/>
<path d="M4 64 C10 58 18 58 22 64 C16 70 8 70 4 64Z" fill="#b9bcc6" opacity=".6"/>
</g>
<g filter="url(#b2)"><path d="M43 30 h16 v34 h-16Z" fill="#b9c2d2" opacity=".5"/></g>
<rect x="49.6" y="8.8" width="1" height="29" fill="#6d6f78"/><rect x="51.2" y="18.2" width="3.2" height="3.2" fill="#cf7a32"/>
<path d="M50.2 35.5 C53 39 56 45 56.4 50.5 H44.4 C44.8 45 47.4 39 50.2 35.5Z" fill="#4c5062"/>
<path d="M50.2 35.5 C53 39 56 45 56.4 50.5 H52.4Z" fill="#8a8288"/>
<rect x="44.6" y="50" width="12" height="14" fill="#c9a898"/><rect x="49" y="50.6" width="7.6" height="6" fill="#ebe6e6"/>
<rect x="43" y="57" width="15.6" height="1.6" fill="#8a6a5a"/>
<g filter="url(#b4)">
<path d="M-6 88 C2 76 14 78 22 70 C28 58 40 54 48 62 C56 66 62 68 68 62 C76 50 92 52 98 62 C104 66 110 68 116 72 V116 H-6Z" fill="#030303"/>
<path d="M10 90 C20 70 36 62 50 66 C64 68 82 70 94 84 V116 H10Z" fill="#000"/>
</g>
<g filter="url(#b2)"><circle cx="30" cy="62" r="5" fill="#111"/><circle cx="84" cy="58" r="6" fill="#0c0c0c"/><circle cx="60" cy="66" r="5" fill="#0a0a0a"/><circle cx="42" cy="58" r="4" fill="#111"/></g>
<rect x="-2" y="84" width="12" height="28" fill="#262d36" opacity=".8" filter="url(#b2)"/></svg><div class="dl"><svg viewBox="0 0 22 22"><path d="M11 4V12.6M7.2 9.2L11 12.9L14.8 9.2M5.9 15.9H16.1" fill="none" stroke="#fff" stroke-width="1.9"/></svg></div></div>
<div class="l" style="left:177.5px;top:547.5px">黑色烟雾</div>
<div class="t" id="t21" style="left:299.8px;width:107.4px;top:434px"><svg class="pic" viewBox="0 0 108 108" preserveAspectRatio="none"><rect width="108" height="108" fill="url(#skyT)"/>
<path d="M0 74 C8 70 14 67 20 67.6 C28 66 34 64 40 66 C50 68 60 70 70 69 C82 68 94 66 108 64 V84 H0Z" fill="#8d96a6" opacity=".85"/>
<rect y="81.4" width="108" height="27" fill="url(#seaT)"/>
<rect y="81.4" width="108" height="3" fill="#4c5562" opacity=".6"/>
<use href="#tower"/><defs><linearGradient id="g21" x1="0" y1="0" x2="0" y2="1"><stop offset="0" stop-color="#dfe3ea" stop-opacity=".4"/><stop offset=".22" stop-color="#eef0f4" stop-opacity=".72"/><stop offset=".5" stop-color="#f4f4f6" stop-opacity=".88"/><stop offset="1" stop-color="#f4f4f7" stop-opacity=".96"/></linearGradient></defs>
<rect width="108" height="108" fill="url(#g21)"/>
<g filter="url(#b7)"><ellipse cx="24" cy="60" rx="36" ry="28" fill="#fff" opacity=".95"/><ellipse cx="66" cy="84" rx="40" ry="20" fill="#fafafc" opacity=".8"/>
<ellipse cx="106" cy="46" rx="9" ry="24" fill="#b4b4c4" opacity=".6"/></g></svg><div class="dl"><svg viewBox="0 0 22 22"><path d="M11 4V12.6M7.2 9.2L11 12.9L14.8 9.2M5.9 15.9H16.1" fill="none" stroke="#fff" stroke-width="1.9"/></svg></div></div>
<div class="l" style="left:305.3px;top:547.5px">白色烟雾</div>
<div class="t" id="t30" style="left:172px;width:108px;top:616px"><svg class="pic" viewBox="0 0 108 108" preserveAspectRatio="none"><rect width="108" height="108" fill="url(#skyC)"/>
<rect y="56" width="108" height="52" fill="#8b939b"/>
<rect y="53" width="108" height="7" fill="#b9c1c8" opacity=".8"/>
<rect y="60" width="108" height="5" fill="#9aa3ab"/>
<path d="M0 72h8v6h6v-4h7v8h40v-6h9v4h8v-7h10v6h12v-5h8v36H0Z" fill="#6b737c" opacity=".55"/>
<path d="M64 80h10v-6h8v10h12v-8h14v32H64Z" fill="#a9aeb4" opacity=".5"/>
<use href="#sky2"/><use href="#sky1"/></svg><div class="dl"><svg viewBox="0 0 22 22"><path d="M11 4V12.6M7.2 9.2L11 12.9L14.8 9.2M5.9 15.9H16.1" fill="none" stroke="#fff" stroke-width="1.9"/></svg></div></div>
<div class="l" style="left:177.5px;top:729.5px">左下方 II</div>
<div class="t" id="t31" style="left:299.8px;width:107.4px;top:616px"><svg class="pic" viewBox="0 0 108 108" preserveAspectRatio="none"><rect width="108" height="108" fill="#fefefe"/>
<g filter="url(#bv)">
<rect x="-10" y="86" width="128" height="40" fill="#8b97a5"/>
<rect x="-10" y="98" width="128" height="30" fill="#5d646e"/>
<rect x="51" y="42" width="13.6" height="80" fill="#4a4c58"/>
<rect x="57" y="54" width="7" height="70" fill="#a98a76"/>
<rect x="50.6" y="60" width="6" height="24" fill="#10131c"/>
<rect x="44.6" y="62" width="6" height="50" fill="#2b3040"/>
<rect x="24" y="86" width="7" height="40" fill="#2a2f3e"/>
<rect x="31" y="86" width="6" height="40" fill="#c29c84"/>
<rect x="40" y="90" width="5" height="30" fill="#20242e"/>
<rect x="6" y="98" width="14" height="16" fill="#efe4da"/>
<rect x="86" y="98" width="10" height="16" fill="#ded5ce"/>
<rect x="70" y="100" width="8" height="16" fill="#3a3f4a"/>
</g></svg><div class="dl"><svg viewBox="0 0 22 22"><path d="M11 4V12.6M7.2 9.2L11 12.9L14.8 9.2M5.9 15.9H16.1" fill="none" stroke="#fff" stroke-width="1.9"/></svg></div></div>
<div class="l" style="left:305.3px;top:729.5px">竖向模糊 II</div>
<div class="t" id="t32" style="left:427.2px;width:107.9px;top:616px"><svg class="pic" viewBox="0 0 108 108" preserveAspectRatio="none"><defs><linearGradient id="g32" x1="0" y1="0" x2="0" y2="1"><stop offset="0" stop-color="#f7f4f2"/><stop offset=".12" stop-color="#fcfbfa"/><stop offset=".38" stop-color="#faf6f4"/><stop offset=".5" stop-color="#f0d6cb"/><stop offset=".56" stop-color="#dcb8a4"/><stop offset="1" stop-color="#9a8474"/></linearGradient></defs>
<rect width="108" height="108" fill="url(#g32)"/>
<g filter="url(#b1)">
<path d="M54 56 L0 64 V108 H30Z" fill="#8a6a5a"/>
<path d="M54 56 L0 59 V70Z" fill="#dcb09a"/>
<path d="M54 56 L0 84 V92Z" fill="#c0a694"/>
<path d="M54 56 L10 108 H40Z" fill="#b3a598"/>
<path d="M54 56 L14 108 H22 Z" fill="#6d564c"/>
<path d="M54 56 L40 108 H50Z" fill="#6b5247"/>
<path d="M54 56 L62 108 H82Z" fill="#625a5a"/>
<path d="M54 56 L72 108 H76Z" fill="#b9aca0"/>
<path d="M54 56 L82 108 H108 V96Z" fill="#a99a8c"/>
<path d="M54 56 L108 96 V78Z" fill="#6f6a68"/>
<path d="M54 56 L108 78 V64Z" fill="#ab9a8a"/>
<path d="M54 56 L108 64 V58Z" fill="#d9b6a0"/>
<path d="M54 56 L108 84 V88Z" fill="#ddd8d2"/>
<path d="M54 56 L108 70 V72Z" fill="#6a6464"/>
<path d="M70 50 h4 v8 h-4Z M62 54 h3 v5 h-3Z" fill="#ddb09a"/>
<path d="M54 25 L54.8 40 L57 46 L58.4 60 L63 108 H44.5 L49.6 60 L51 46 L53.2 40Z" fill="#8b7262"/>
<path d="M54 25 L54.8 40 L57 46 L58.4 60 L63 108 H56 L54 46Z" fill="#a48c7a"/>
</g></svg><div class="dl"><svg viewBox="0 0 22 22"><path d="M11 4V12.6M7.2 9.2L11 12.9L14.8 9.2M5.9 15.9H16.1" fill="none" stroke="#fff" stroke-width="1.9"/></svg></div></div>
<div class="l" style="left:432.7px;top:729.5px">吸入</div>
<div class="t" id="t33" style="left:554.9px;width:107.4px;top:616px"><svg class="pic" viewBox="0 0 108 108" preserveAspectRatio="none"><rect width="108" height="108" fill="#fbfbfb"/>
<g filter="url(#b7)">
<path d="M-10 84 L118 20 V52 L-10 110Z" fill="#f1dcd3" opacity=".85"/>
<path d="M42 70 L118 32 V118 H50Z" fill="#767c88"/>
<path d="M-10 96 L40 76 L60 118 H-10Z" fill="#b9a096" opacity=".9"/>
<path d="M70 70 L118 50 V70 L80 88Z" fill="#a9aeb8" opacity=".8"/>
</g>
<g filter="url(#b3)" transform="rotate(-24 44 70)">
<rect x="35" y="26" width="19" height="96" fill="#8d8b8e"/>
<rect x="35" y="52" width="19" height="70" fill="#8a6e62"/>
<rect x="42" y="58" width="5.4" height="26" fill="#4c4240"/>
<rect x="47" y="74" width="5.5" height="48" fill="#a9826c"/>
<rect x="27" y="78" width="8" height="50" fill="#6f6664"/>
<rect x="15" y="88" width="7" height="40" fill="#8d7b72"/>
<rect x="58" y="84" width="8" height="40" fill="#5c5a60"/>
</g>
<g filter="url(#b4)"><path d="M-6 -6 H50 L-6 60Z" fill="#fff" opacity=".6"/></g></svg><div class="dl"><svg viewBox="0 0 22 22"><path d="M11 4V12.6M7.2 9.2L11 12.9L14.8 9.2M5.9 15.9H16.1" fill="none" stroke="#fff" stroke-width="1.9"/></svg></div></div>
<div class="l" style="left:560.4px;top:729.5px">抖动 II</div>
<div class="t" id="t34" style="left:682.2px;width:108px;top:616px"><svg class="pic" viewBox="0 0 108 108" preserveAspectRatio="none"><rect width="108" height="108" fill="#fbfbfb"/>
<g filter="url(#b7)">
<path d="M-10 22 L118 84 V118 H-10Z" fill="#f0dcd3" opacity=".85"/>
<path d="M-10 46 L70 84 L80 118 H-10Z" fill="#877d78"/>
<path d="M-10 40 L30 58 L20 70 L-10 58Z" fill="#a9a09c" opacity=".8"/>
<path d="M84 80 L118 92 V118 H80Z" fill="#d9c4ba" opacity=".8"/>
</g>
<g filter="url(#b3)" transform="rotate(21 70 74)">
<rect x="66" y="30" width="17" height="96" fill="#8a8587"/>
<rect x="66" y="58" width="17" height="68" fill="#9a7c6a"/>
<rect x="66" y="60" width="6.4" height="26" fill="#4c4446"/>
<rect x="77" y="70" width="6" height="56" fill="#a98a76"/>
<rect x="46" y="70" width="12" height="60" fill="#6c6261"/>
<rect x="20" y="76" width="9" height="50" fill="#4e4a4c"/>
<rect x="29" y="78" width="8" height="50" fill="#9c8272"/>
<rect x="6" y="70" width="8" height="50" fill="#6a6462"/>
</g>
<g filter="url(#b4)"><path d="M60 -6 H114 V60Z" fill="#fff" opacity=".6"/></g></svg><div class="dl"><svg viewBox="0 0 22 22"><path d="M11 4V12.6M7.2 9.2L11 12.9L14.8 9.2M5.9 15.9H16.1" fill="none" stroke="#fff" stroke-width="1.9"/></svg></div></div>
<div class="l" style="left:687.7px;top:729.5px">抖动</div>
<div class="t" id="t40" style="left:172px;width:108px;top:762px"><svg class="pic" viewBox="0 0 108 108" preserveAspectRatio="none"><rect width="108" height="108" fill="#fcfcfd"/>
<g filter="url(#b4)">
<path d="M-6 -6 H16 C14 6 22 24 36 60 H-6Z" fill="#8b98a8" opacity=".85"/>
<path d="M-6 24 C2 28 14 40 24 60 H-6Z" fill="#55606c" opacity=".9"/>
<path d="M94 -6 H114 V16 C108 8 100 2 94 -6Z" fill="#b9c0cc" opacity=".7"/>
</g>
<g filter="url(#b2)">
<path d="M26 44 L34 40 L40 52 L30 56Z" fill="#3c434c"/>
<path d="M56 56 L66 36 C70 32 78 36 78 42 L76 60 Z" fill="#4a4f58"/>
<path d="M66 37 L76 36 L77 46 L68 46Z" fill="#8a8886"/>
</g></svg></div>
<div class="t" id="t41" style="left:299.8px;width:107.4px;top:762px"><svg class="pic" viewBox="0 0 108 108" preserveAspectRatio="none"><rect width="108" height="108" fill="#fafafb"/>
<g filter="url(#b4)"><path d="M102 6 H114 V60 H100 C104 40 104 22 102 6Z" fill="#93a0b2" opacity=".8"/>
<path d="M-6 -6 H20 C8 0 2 10 -6 20Z" fill="#c8ccd4" opacity=".5"/>
<path d="M60 -6 H100 L108 10 C90 4 74 2 60 -6Z" fill="#dfe2e8" opacity=".6"/></g>
<g filter="url(#b2)"><path d="M33 40 C34 33 42 30 48 34 L76 56 H44Z" fill="#a59686"/>
<path d="M33 40 C34 33 42 30 46 33 L48 40 L40 47Z" fill="#4f4e4e"/>
<path d="M40 47 L48 40 L60 58 H48Z" fill="#7c746c"/></g></svg></div>
<div class="t" id="t42" style="left:427.2px;width:107.9px;top:762px"><svg class="pic" viewBox="0 0 108 108" preserveAspectRatio="none"><rect width="108" height="108" fill="#fdfdfd"/>
<path d="M53.1 0V19.4M62.5 0V19.4M65.4 3V19.4" stroke="#a9adb8" stroke-width=".6"/>
<rect x="53.7" y="17.4" width="9.4" height="3" fill="#5c6676"/>
<rect x="49" y="19.0" width="18.8" height="60" fill="#6d7785"/>
<rect x="52.8" y="21.4" width="15.0" height="2" fill="#8f99a6" opacity=".7"/>
<rect x="52.8" y="33.4" width="15.0" height="60" fill="#a8947f"/>
<rect x="49" y="19.0" width="3.8" height="60" fill="#1c2438"/>
<rect x="60.3" y="23.4" width=".7" height="60" fill="#5c5a5e" opacity=".6"/></svg></div>
<div class="t" id="t43" style="left:554.9px;width:107.4px;top:762px"><svg class="pic" viewBox="0 0 108 108" preserveAspectRatio="none"><rect width="108" height="108" fill="#fdfdfd"/>
<path d="M52.6 0V31M59.3 0V31M61.3 3V31" stroke="#a9adb8" stroke-width=".6"/>
<rect x="53.0" y="29" width="6.7" height="3" fill="#5c6676"/>
<rect x="49.7" y="30.6" width="13.3" height="60" fill="#6d7785"/>
<rect x="52.4" y="33" width="10.6" height="2" fill="#8f99a6" opacity=".7"/>
<rect x="52.4" y="45" width="10.6" height="60" fill="#a8947f"/>
<rect x="49.7" y="30.6" width="2.7" height="60" fill="#1c2438"/>
<rect x="57.7" y="35" width=".7" height="60" fill="#5c5a5e" opacity=".6"/></svg></div>
<div class="t" id="t44" style="left:682.2px;width:108px;top:762px"><svg class="pic" viewBox="0 0 108 108" preserveAspectRatio="none"><rect width="108" height="108" fill="#fdfdfd"/>
<path d="M52.8 0V27M60.6 0V27M63.0 3V27" stroke="#a9adb8" stroke-width=".6"/>
<rect x="53.3" y="25" width="7.8" height="3" fill="#5c6676"/>
<rect x="49.4" y="26.6" width="15.6" height="60" fill="#6d7785"/>
<rect x="52.5" y="29" width="12.5" height="2" fill="#8f99a6" opacity=".7"/>
<rect x="52.5" y="41" width="12.5" height="60" fill="#a8947f"/>
<rect x="49.4" y="26.6" width="3.1" height="60" fill="#1c2438"/>
<rect x="58.8" y="31" width=".7" height="60" fill="#5c5a5e" opacity=".6"/></svg></div>
</div>
<svg class="abs" width="16" height="24" viewBox="-1 -1 16 24" style="left:218.4px;top:71px"><path d="M0.5 0.6 L0.5 16.8 L4.3 13.2 L7.1 19 L9.9 17.8 L7.2 12.2 L12 12 Z" fill="#fff" stroke="#000" stroke-width="1.1" stroke-linejoin="miter"/></svg>
</body>
</html>
